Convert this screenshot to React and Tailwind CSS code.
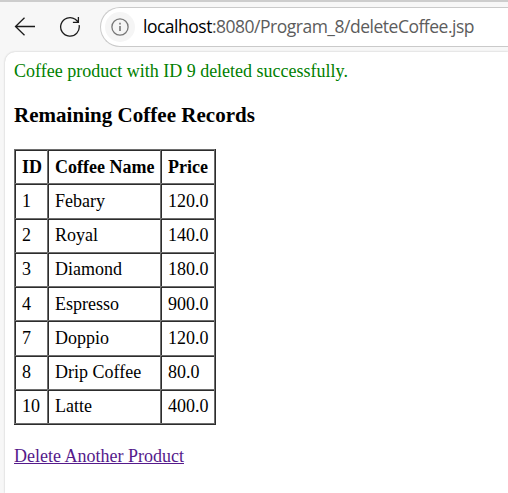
const rows = [
  ["1", "Febary", "120.0", "h-[35px]", "pt-[7px]"],
  ["2", "Royal", "140.0", "h-[34px]", "pt-[6px]"],
  ["3", "Diamond", "180.0", "h-[34px]", "pt-[6px]"],
  ["4", "Espresso", "900.0", "h-[34px]", "pt-[7px]"],
  ["7", "Doppio", "120.0", "h-[35px]", "pt-[7px]"],
  ["8", "Drip Coffee", "80.0", "h-[34px]", "pt-[6px]"],
  ["10", "Latte", "400.0", "h-[34px]", "pt-[6px]"],
];

const cell =
  "flex items-start border-t border-l border-[#6e6e6e] pl-[7px] shadow-[inset_1px_1px_0_#2c2c2c]";

function Row({ values, height, pad, bold }) {
  return (
    <div className={`grid grid-cols-[33px_113px_54px] ${height} ${bold ? "font-bold" : ""}`}>
      {values.map((v, i) => (
        <div key={i} className={cell}>
          <span className={`whitespace-nowrap ${pad}`}>{v}</span>
        </div>
      ))}
    </div>
  );
}

export default function App() {
  return (
    <div className="flex h-[493px] w-[508px] flex-col overflow-hidden bg-[#f7f7f7]">
      <header className="flex h-[52px] shrink-0 items-start border-t-2 border-[#cdcdcd]">
        <svg className="ml-[14px] mt-[14px] h-[22px] w-[22px] shrink-0" viewBox="0 0 22 22" fill="none" stroke="#1b1b1b" strokeWidth="1.3">
          <path d="M21 10.5H1.5M10.5 1.8L1.5 10.5l9 8.7" />
        </svg>
        <svg className="ml-[23px] mt-[14px] h-[22px] w-[22px] shrink-0" viewBox="0 0 22 22" fill="none" stroke="#1b1b1b" strokeWidth="1.3">
          <path d="M20.1 9.2A9.3 9.3 0 1 1 16.3 3.3L19.3 6M19.4 1v5.4h-5.5" />
        </svg>
        <div className="ml-[19px] mt-[5px] flex h-10 flex-1 items-center rounded-l-full border-y border-l border-[#cacaca] bg-white">
          <div className="ml-1 flex h-[30px] w-[30px] shrink-0 items-center justify-center rounded-full bg-[#f5f5f5]">
            <svg className="h-[18px] w-[18px]" viewBox="0 0 18 18" fill="none" stroke="#777" strokeWidth="1.3">
              <circle cx="9" cy="9" r="8.1" />
              <path d="M9 8v5M9 4.8v1.6" strokeWidth="1.6" />
            </svg>
          </div>
          <div className="mb-[2px] ml-[8px] whitespace-nowrap font-['Open_Sans',sans-serif] text-[17.5px] leading-6 tracking-[-0.49px] text-[#5c5c5c]">
            <span className="text-black">localhost</span>:8080/Program_8/deleteCoffee.jsp
          </div>
        </div>
      </header>
      <main className="ml-[5px] flex-1 rounded-tl-[10px] bg-white pl-[9px] pt-[9px] font-['Liberation_Serif',serif] text-[18px] leading-5 text-black shadow-[0_0_2px_#bbb]">
        <p className="text-[#008000] whitespace-nowrap">Coffee product with ID 9 deleted successfully.</p>
        <h3 className="mt-[22px] text-[21px] font-bold leading-6 tracking-[0.03px]">Remaining Coffee Records</h3>
        <div className="mt-[22px] w-[202px] border-b border-r border-[#2c2c2c]">
          <div className="border-b border-r border-[#6e6e6e]">
            <Row values={["ID", "Coffee Name", "Price"]} height="h-[34px]" pad="pt-[7px]" bold />
            {rows.map(([id, name, price, height, pad]) => (
              <Row key={id} values={[id, name, price]} height={height} pad={pad} />
            ))}
          </div>
        </div>
        <a className="mt-[21px] block w-fit text-[#551a8b] underline">Delete Another Product</a>
      </main>
    </div>
  );
}
